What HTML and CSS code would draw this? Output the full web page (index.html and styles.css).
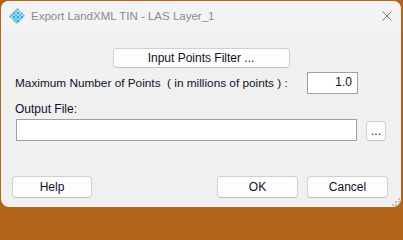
FILE: index.html
```html
<!DOCTYPE html>
<html>
<head>
<meta charset="utf-8">
<link rel="stylesheet" href="styles.css">
</head>
<body>
<div class="window">
  <div class="titlebar">
    <svg class="appicon" width="16" height="16" viewBox="0 0 16 16">
      <defs>
        <linearGradient id="g" x1="0" y1="0" x2="0" y2="1">
          <stop offset="0" stop-color="#4fb8e0"/>
          <stop offset="1" stop-color="#1d93c8"/>
        </linearGradient>
        <pattern id="chk" width="4" height="4" patternUnits="userSpaceOnUse">
          <rect width="4" height="4" fill="#d8eef8"/>
          <rect width="2" height="2" fill="url(#g)"/>
          <rect x="2" y="2" width="2" height="2" fill="#7ccdea"/>
        </pattern>
        <clipPath id="dia"><polygon points="8,0 16,8 8,16 0,8"/></clipPath>
      </defs>
      <g clip-path="url(#dia)">
        <rect width="16" height="16" fill="url(#chk)"/>
        <rect width="16" height="16" fill="url(#g)" opacity="0.35"/>
      </g>
    </svg>
    <span class="title">Export LandXML TIN - LAS Layer_1</span>
    <svg class="close" width="10" height="10" viewBox="0 0 10 10">
      <path d="M0.5 0.5 L9.5 9.5 M9.5 0.5 L0.5 9.5" stroke="#777777" stroke-width="1" fill="none"/>
    </svg>
  </div>
  <div class="content">
    <div class="row-center">
      <button class="btn filter">Input Points Filter ...</button>
    </div>
    <div class="row-max">
      <span class="label max-label">Maximum Number of Points &nbsp;( in millions of points ) :</span>
      <div class="field num">1.0</div>
    </div>
    <div class="label out-label">Output File:</div>
    <div class="row-file">
      <div class="field path"></div>
      <button class="btn browse">...</button>
    </div>
    <div class="footer">
      <button class="btn help">Help</button>
      <div class="right-btns">
        <button class="btn ok">OK</button>
        <button class="btn cancel">Cancel</button>
      </div>
    </div>
  </div>
  <svg class="grip" width="8" height="8" viewBox="0 0 8 8">
    <rect x="6" y="0" width="2" height="2" fill="#c4c4c4"/>
    <rect x="3" y="3" width="2" height="2" fill="#c4c4c4"/>
    <rect x="6" y="3" width="2" height="2" fill="#c4c4c4"/>
    <rect x="0" y="6" width="2" height="2" fill="#c4c4c4"/>
    <rect x="3" y="6" width="2" height="2" fill="#c4c4c4"/>
    <rect x="6" y="6" width="2" height="2" fill="#c4c4c4"/>
  </svg>
</div>
</body>
</html>
```
FILE: styles.css
```css
html, body {
  margin: 0;
  padding: 0;
}
body {
  width: 403px;
  height: 209px;
  background: #b0641c;
  overflow: hidden;
  font-family: "Segoe UI", "Liberation Sans", Arial, sans-serif;
  font-size: 12px;
  color: #10102a;
}
.window {
  position: relative;
  margin: 1px 0 0 1px;
  width: 400px;
  height: 206px;
  background: #f0f0f0;
  border-radius: 8px;
  overflow: hidden;
  display: flex;
  flex-direction: column;
}
.titlebar {
  height: 30px;
  background: #f3f3f3;
  display: flex;
  align-items: center;
  padding-left: 8px;
  flex: none;
}
.appicon {
  flex: none;
  margin-right: 6px;
}
.title {
  color: #8a8a8a;
  font-size: 11.5px;
  flex: 1;
}
.close {
  flex: none;
  margin-right: 9px;
}
.content {
  flex: 1;
  display: flex;
  flex-direction: column;
  padding: 17px 0 0 14px;
}
.btn {
  font-family: inherit;
  font-size: 12px;
  color: #10102a;
  background: #fdfdfd;
  border: 1px solid #d0d0d0;
  border-bottom-color: #c0c0c0;
  border-radius: 4px;
  padding: 0;
  height: 21px;
}
.row-center {
  display: flex;
  justify-content: center;
  padding-right: 14px;
}
.filter {
  width: 177px;
  height: 20px;
}
.row-max {
  display: flex;
  align-items: center;
  justify-content: space-between;
  margin-top: 4px;
  width: 343px;
}
.label {
  white-space: nowrap;
}
.max-label {
  font-size: 11.8px;
}
.field {
  background: #ffffff;
  border: 1px solid #a0a0a0;
  box-sizing: border-box;
}
.num {
  width: 51px;
  height: 22px;
  text-align: right;
  padding-right: 5px;
  line-height: 19px;
}
.out-label {
  margin-top: 7px;
  height: 16px;
  line-height: 16px;
}
.row-file {
  display: flex;
  align-items: flex-start;
  margin-top: 2px;
  padding-left: 1px;
}
.path {
  width: 341px;
  height: 22px;
}
.browse {
  margin: 2px 0 0 9px;
  width: 20px;
  height: 20px;
  line-height: 14px;
}
.footer {
  display: flex;
  justify-content: space-between;
  margin-top: 35px;
  margin-left: -3px;
  width: 376px;
}
.help, .ok, .cancel {
  height: 22px;
}
.help {
  width: 80px;
}
.right-btns {
  display: flex;
  gap: 9px;
}
.ok, .cancel {
  width: 81px;
}
.grip {
  position: absolute;
  right: 1px;
  bottom: 1px;
}
```
